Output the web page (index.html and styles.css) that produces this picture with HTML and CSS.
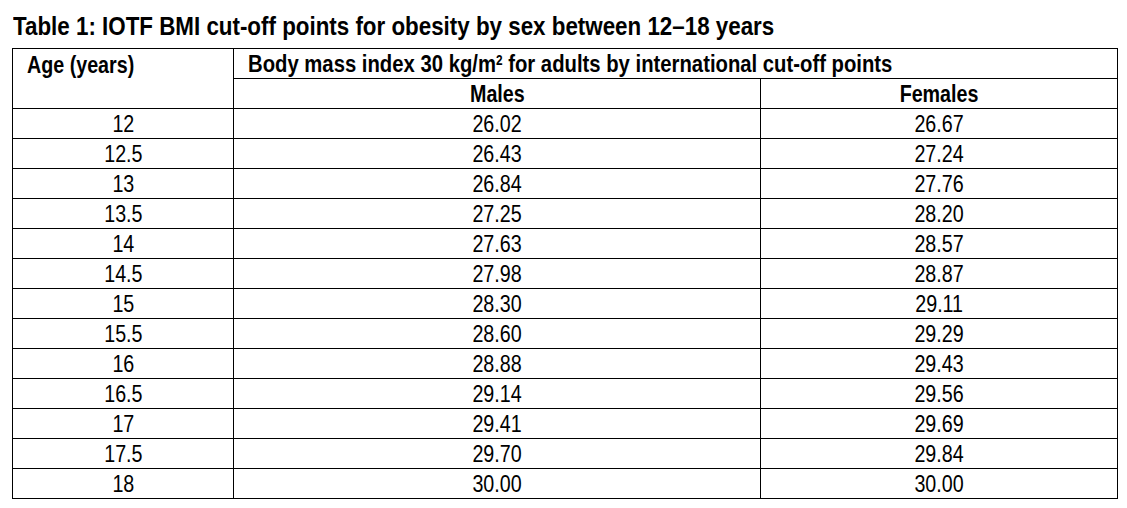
FILE: index.html
```html
<!DOCTYPE html>
<html lang="en">
<head>
<meta charset="utf-8">
<title>IOTF BMI cut-off points</title>
<link rel="stylesheet" href="styles.css">
</head>
<body>
<div class="page">
  <div class="caption"><span class="t t-left t-caption">Table 1: IOTF BMI cut-off points for obesity by sex between 12–18 years</span></div>
  <table class="bmi">
    <colgroup>
      <col class="c-age">
      <col class="c-male">
      <col class="c-female">
    </colgroup>
    <thead>
      <tr>
        <th rowspan="2" class="h-age"><span class="t t-left">Age (years)</span></th>
        <th colspan="2" class="h-group"><span class="t t-left t-group">Body mass index 30 kg/m<sup>2</sup> for adults by international cut-off points</span></th>
      </tr>
      <tr>
        <th class="h-sex"><span class="t">Males</span></th>
        <th class="h-sex"><span class="t">Females</span></th>
      </tr>
    </thead>
    <tbody>
      <tr><td><span class="t">12</span></td><td><span class="t">26.02</span></td><td><span class="t">26.67</span></td></tr>
      <tr><td><span class="t">12.5</span></td><td><span class="t">26.43</span></td><td><span class="t">27.24</span></td></tr>
      <tr><td><span class="t">13</span></td><td><span class="t">26.84</span></td><td><span class="t">27.76</span></td></tr>
      <tr><td><span class="t">13.5</span></td><td><span class="t">27.25</span></td><td><span class="t">28.20</span></td></tr>
      <tr><td><span class="t">14</span></td><td><span class="t">27.63</span></td><td><span class="t">28.57</span></td></tr>
      <tr><td><span class="t">14.5</span></td><td><span class="t">27.98</span></td><td><span class="t">28.87</span></td></tr>
      <tr><td><span class="t">15</span></td><td><span class="t">28.30</span></td><td><span class="t">29.11</span></td></tr>
      <tr><td><span class="t">15.5</span></td><td><span class="t">28.60</span></td><td><span class="t">29.29</span></td></tr>
      <tr><td><span class="t">16</span></td><td><span class="t">28.88</span></td><td><span class="t">29.43</span></td></tr>
      <tr><td><span class="t">16.5</span></td><td><span class="t">29.14</span></td><td><span class="t">29.56</span></td></tr>
      <tr><td><span class="t">17</span></td><td><span class="t">29.41</span></td><td><span class="t">29.69</span></td></tr>
      <tr><td><span class="t">17.5</span></td><td><span class="t">29.70</span></td><td><span class="t">29.84</span></td></tr>
      <tr><td><span class="t">18</span></td><td><span class="t">30.00</span></td><td><span class="t">30.00</span></td></tr>
    </tbody>
  </table>
</div>
</body>
</html>
```
FILE: styles.css
```css
html, body {
  margin: 0;
  padding: 0;
  background: #ffffff;
}

body {
  font-family: "Liberation Sans", Arial, sans-serif;
  color: #000000;
}

/* Arial Narrow look: condensed Liberation Sans */
.t {
  display: inline-block;
  transform: scaleX(0.82);
  transform-origin: 50% 50%;
}

.t-left {
  transform-origin: 0 50%;
}

.t-caption {
  transform: scaleX(0.86);
}

.t-group {
  transform: scaleX(0.845);
}

.page {
  padding: 11px 0 0 12px;
}

.caption {
  font-size: 26px;
  font-weight: bold;
  line-height: 30px;
  margin: 0 0 7px 1px;
  white-space: nowrap;
}

.bmi {
  border-collapse: collapse;
  table-layout: fixed;
  width: 1105px;
  font-size: 24px;
}

.c-age { width: 221px; }
.c-male { width: 527px; }
.c-female { width: 357px; }

.bmi th,
.bmi td {
  border: 1px solid #000000;
  padding: 0;
  height: 29px;
  line-height: 24px;
  text-align: center;
  vertical-align: middle;
  white-space: nowrap;
}

.bmi th {
  font-weight: bold;
}

.bmi .h-age {
  text-align: left;
  vertical-align: top;
  padding: 4px 0 0 14px;
}

.bmi .h-group {
  text-align: left;
  padding-left: 14px;
}

.bmi sup {
  font-size: 14px;
  line-height: 0;
  vertical-align: 7px;
}
```
